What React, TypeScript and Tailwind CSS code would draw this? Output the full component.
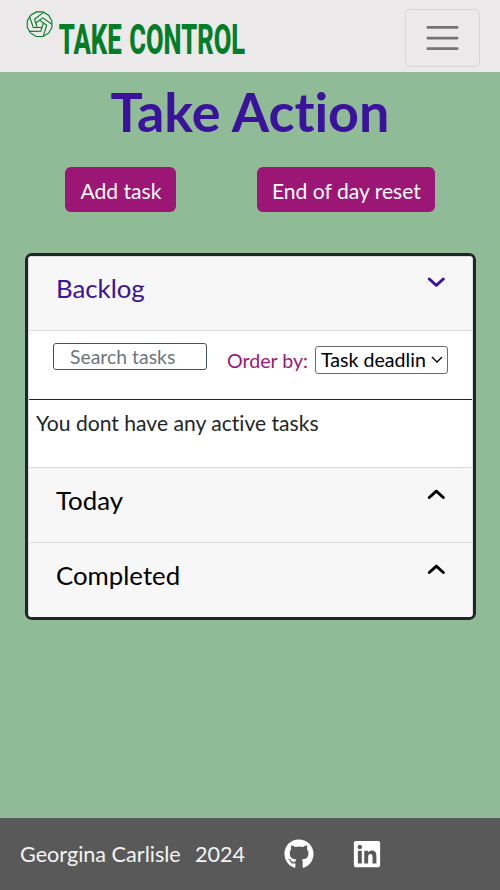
import React from "react";
import { FaGithub, FaLinkedin } from "react-icons/fa";

const BLADES = [0, 72, 144, 216, 288];

function Logo() {
  return (
    <svg width="260" height="72" viewBox="0 0 260 72" className="block text-[#047d28]">
      <g transform="translate(39.6 24.2)" fill="none" stroke="currentColor" strokeWidth="1.1">
        <polygon points="-3.3,-12.3 3.3,-12.3 9,-9 12.3,-3.3 12.3,3.3 9,9 3.3,12.3 -3.3,12.3 -9,9 -12.3,3.3 -12.3,-3.3 -9,-9" />
        {BLADES.map((angle) => (
          <path key={angle} transform={`rotate(${angle})`} d="M-10 -7.4 L-6.3 3.3 L2.4 3.3" />
        ))}
      </g>
      <g fill="currentColor" fontFamily="Roboto, sans-serif" fontWeight="800" fontSize="42">
        <text transform="translate(58.7 53.8) scale(.6 1)" textLength="105" lengthAdjust="spacingAndGlyphs">TAKE</text>
        <text transform="translate(129.3 53.8) scale(.6 1)" textLength="193" lengthAdjust="spacingAndGlyphs">CONTROL</text>
      </g>
    </svg>
  );
}

function Chevron({ down = false }: { down?: boolean }) {
  return (
    <svg width="18" height="11" viewBox="0 0 18 11" fill="none" stroke="currentColor" strokeWidth="2.9" strokeLinecap="round" strokeLinejoin="round">
      <path d={down ? "M2.3 2 L9.3 8.3 L16.3 2" : "M2.3 8.5 L9.3 2.2 L16.3 8.5"} />
    </svg>
  );
}

function Section({ title, open = false }: { title: string; open?: boolean }) {
  return (
    <button className={`flex w-full shrink-0 items-start justify-between bg-[#f7f7f7] pr-[27px] pl-[27px] text-left text-[25.8px] leading-8 ${open ? "h-[73px] pt-[15px] text-[#3b129c]" : "h-[74px] pt-[16px] text-black"}`}>
      <span>{title}</span>
      <span className="pt-[5px]"><Chevron down={open} /></span>
    </button>
  );
}

export default function App() {
  return (
    <div className="flex h-[890px] w-[500px] flex-col overflow-hidden bg-[#8fbc96] font-['Lato',sans-serif] text-[21.1px] text-[#212529] [font-variant-ligatures:none]">
      <header className="flex h-[72px] shrink-0 items-start justify-between bg-[#ebe9ea] pr-5">
        <Logo />
        <button aria-label="Menu" className="mt-[9px] flex h-[58px] w-[75px] items-center justify-center rounded-[5px] border border-[#d7d5d6]">
          <svg width="33" height="26" viewBox="0 0 33 26" stroke="#757475" strokeWidth="2.67" strokeLinecap="round">
            <path d="M1.8 2.4 H31.2 M1.8 13.1 H31.2 M1.8 23.7 H31.2" />
          </svg>
        </button>
      </header>
      <main className="flex grow flex-col">
        <h1 className="mt-[7px] h-16 text-center text-[53.9px] leading-[64px] font-bold text-[#3b129c]">Take Action</h1>
        <div className="mt-[24px] flex h-[45px] gap-[81px] pl-[65.4px] text-white">
          <button className="h-[45px] w-[111px] rounded-[6px] bg-[#9b1675] pt-[2px]">Add task</button>
          <button className="h-[45px] w-[178px] rounded-[6px] bg-[#9b1675] pt-[2px]">End of day reset</button>
        </div>
        <div className="mt-[41px] ml-[25px] flex h-[367px] w-[451px] flex-col overflow-hidden rounded-[7px] border-[3px] border-[#212529] bg-[#f7f7f7]">
          <div className="border border-b-0 border-[#dedede]">
            <Section title="Backlog" open />
            <div className="border-y border-[#dcdcdc] bg-white">
              <div className="flex h-[69px] items-start border-b border-[#212529] pl-[24px]">
                <input className="mt-[12px] h-[27px] w-[154px] rounded-[3px] border border-[#495057] bg-white pr-3 pb-[1px] pl-4 text-[19.4px] leading-6 placeholder:text-[#6c757d]" placeholder="Search tasks" />
                <label className="ml-[20px] mt-[14px] w-[81px] text-[19.6px] leading-8 whitespace-nowrap text-[#9b1675]">Order by:</label>
                <button className="ml-[7px] mt-[15px] flex h-[28px] w-[133px] items-center rounded-[3px] border border-[#6b6b6b] bg-white pl-[5px] text-[19.6px] text-black">
                  <span className="w-[105px] overflow-hidden text-left whitespace-nowrap">Task deadline</span>
                  <svg width="12" height="8" viewBox="0 0 12 8" className="ml-[5px]" fill="none" stroke="currentColor" strokeWidth="1.3"><path d="M1 1 L6 6 L11 1" /></svg>
                </button>
              </div>
              <p className="h-[67px] pt-[7px] pl-[7px] leading-8">You dont have any active tasks</p>
            </div>
            <Section title="Today" />
            <div className="border-t border-[#dcdcdc]"><Section title="Completed" /></div>
          </div>
        </div>
      </main>
      <footer className="flex h-[72px] shrink-0 items-center bg-[#595959] pl-5 text-[21.6px] text-[#f4f4f4]">
        <span className="w-[162px]">Georgina Carlisle</span>
        <span className="ml-[13px] w-[50px]">2024</span>
        <FaGithub className="ml-[39px] size-[30px] text-white" />
        <FaLinkedin className="ml-[38px] size-[30px] text-white" />
      </footer>
    </div>
  );
}
